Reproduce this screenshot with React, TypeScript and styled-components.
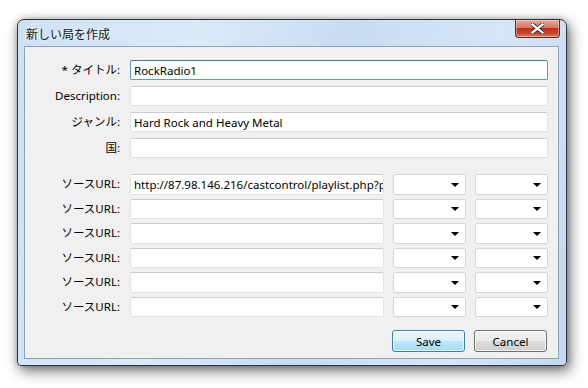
import styled, { createGlobalStyle } from "styled-components";

const GlobalStyle = createGlobalStyle`
  html, body {
    margin: 0;
    padding: 0;
    background: #ffffff;
  }
  body {
    font-family: "Noto Sans", "Noto Sans CJK JP", sans-serif;
    font-size: 12px;
    color: #000;
  }
`;

const Page = styled.div`
  width: 588px;
  height: 388px;
  padding: 19px 0 0 17px;
  box-sizing: border-box;
`;

const Window = styled.div`
  width: 550px;
  height: 347px;
  box-sizing: border-box;
  border: 1px solid #2b3540;
  border-radius: 7px 7px 4px 4px;
  background: linear-gradient(
    100deg,
    #cde1f5 0%,
    #dbeaf9 30%,
    #c8dcf2 55%,
    #d6e6f7 80%,
    #c4d9ef 100%
  );
  box-shadow: 3px 5px 14px rgba(0, 0, 0, 0.55), 0 0 6px rgba(0, 0, 0, 0.25);
  display: flex;
  flex-direction: column;
`;

const TitleBar = styled.div`
  height: 26px;
  display: flex;
  align-items: flex-start;
  justify-content: space-between;
  padding: 0 6px 0 8px;
  flex-shrink: 0;
`;

const Title = styled.div`
  font-family: "Noto Sans CJK JP", sans-serif;
  font-size: 12px;
  color: #1a1a1a;
  margin-top: 5px;
  text-shadow: 0 0 6px rgba(255, 255, 255, 0.9);
`;

const CloseButton = styled.div`
  width: 45px;
  height: 18px;
  box-sizing: border-box;
  border: 1px solid #5a2a24;
  border-top: none;
  border-radius: 0 0 4px 4px;
  background: linear-gradient(
    to bottom,
    #e8a99a 0%,
    #d47866 45%,
    #b9321d 50%,
    #c8452d 80%,
    #e0866e 100%
  );
  display: flex;
  align-items: center;
  justify-content: center;
  box-shadow: inset 0 0 0 1px rgba(255, 255, 255, 0.35);
`;

const Client = styled.div`
  flex: 1;
  margin: 0 7px 6px 6px;
  background: #f0f0f0;
  border: 1px solid #8da2ba;
  padding: 13px 10px 0 0;
  display: flex;
  flex-direction: column;
`;

const FieldGroup = styled.div<{ $gap: number; $top?: number }>`
  display: flex;
  flex-direction: column;
  gap: ${(p) => p.$gap}px;
  margin-top: ${(p) => p.$top ?? 0}px;
`;

const Row = styled.div<{ $h: number }>`
  display: flex;
  align-items: center;
  height: ${(p) => p.$h}px;
`;

const Label = styled.div`
  width: 95px;
  margin-right: 10px;
  text-align: right;
  font-family: "Noto Sans", "Noto Sans CJK JP", sans-serif;
  font-size: 11.5px;
  line-height: 14px;
  color: #000;
  white-space: nowrap;
`;

const TextBox = styled.div<{ $width?: number; $focused?: boolean }>`
  width: ${(p) => (p.$width ? `${p.$width}px` : "auto")};
  flex: ${(p) => (p.$width ? "none" : "1")};
  height: 100%;
  box-sizing: border-box;
  background: #fff;
  border: 1px solid ${(p) => (p.$focused ? "#5b9bd5" : "#dfe3e8")};
  border-top-color: ${(p) => (p.$focused ? "#3d7bad" : "#c9ccd2")};
  border-radius: 2px;
  padding: 0 3px;
  display: flex;
  align-items: center;
  overflow: hidden;
  white-space: nowrap;
  font-family: "Noto Sans", sans-serif;
  font-size: 11.5px;
  color: #000;
`;

const Combo = styled.div`
  width: 73px;
  margin-left: 9px;
  height: 100%;
  box-sizing: border-box;
  background: #fff;
  border: 1px solid #d6d6d6;
  border-radius: 2px;
  display: flex;
  align-items: center;
  justify-content: flex-end;
  padding-right: 6px;
`;

const Arrow = styled.div`
  width: 0;
  height: 0;
  border-left: 4px solid transparent;
  border-right: 4px solid transparent;
  border-top: 4px solid #000;
  margin-top: 1px;
`;

const ButtonRow = styled.div`
  display: flex;
  justify-content: flex-end;
  gap: 9px;
  margin-top: 13px;
  padding-right: 1px;
`;

const Button = styled.div<{ $default?: boolean }>`
  width: 73px;
  height: 22px;
  box-sizing: border-box;
  border: 1px solid ${(p) => (p.$default ? "#3c7fb1" : "#707070")};
  border-radius: 3px;
  background: ${(p) =>
    p.$default
      ? "linear-gradient(to bottom, #eaf6fd 0%, #d9f0fc 50%, #bee6fd 51%, #a7d9f5 100%)"
      : "linear-gradient(to bottom, #f2f2f2 0%, #ebebeb 50%, #dddddd 51%, #cfcfcf 100%)"};
  box-shadow: inset 0 0 0 1px rgba(255, 255, 255, 0.7);
  display: flex;
  align-items: center;
  justify-content: center;
  font-family: "Noto Sans", sans-serif;
  font-size: 11.5px;
  color: #000;
`;

const topFields = [
  { label: "* タイトル:", value: "RockRadio1", focused: true },
  { label: "Description:", value: "" },
  { label: "ジャンル:", value: "Hard Rock and Heavy Metal" },
  { label: "国:", value: "" },
];

const urls = [
  "http://87.98.146.216/castcontrol/playlist.php?port=",
  "",
  "",
  "",
  "",
  "",
];

export default function App() {
  return (
    <Page>
      <GlobalStyle />
      <Window>
        <TitleBar>
          <Title>新しい局を作成</Title>
          <CloseButton>
            <svg width="13" height="11" viewBox="0 0 13 11">
              <path
                d="M1.5 1.5 L11.5 9.5 M11.5 1.5 L1.5 9.5"
                stroke="#3a3a3a"
                strokeWidth="4"
                strokeLinecap="square"
              />
              <path
                d="M1.5 1.5 L11.5 9.5 M11.5 1.5 L1.5 9.5"
                stroke="#ffffff"
                strokeWidth="2.2"
                strokeLinecap="square"
              />
            </svg>
          </CloseButton>
        </TitleBar>
        <Client>
          <FieldGroup $gap={6}>
            {topFields.map((f) => (
              <Row $h={20} key={f.label}>
                <Label>{f.label}</Label>
                <TextBox $focused={f.focused}>{f.value}</TextBox>
              </Row>
            ))}
          </FieldGroup>
          <FieldGroup $gap={4} $top={16}>
            {urls.map((u, i) => (
              <Row $h={20.5} key={i}>
                <Label>ソースURL:</Label>
                <TextBox $width={254}>{u}</TextBox>
                <Combo>
                  <Arrow />
                </Combo>
                <Combo>
                  <Arrow />
                </Combo>
              </Row>
            ))}
          </FieldGroup>
          <ButtonRow>
            <Button $default>Save</Button>
            <Button>Cancel</Button>
          </ButtonRow>
        </Client>
      </Window>
    </Page>
  );
}
